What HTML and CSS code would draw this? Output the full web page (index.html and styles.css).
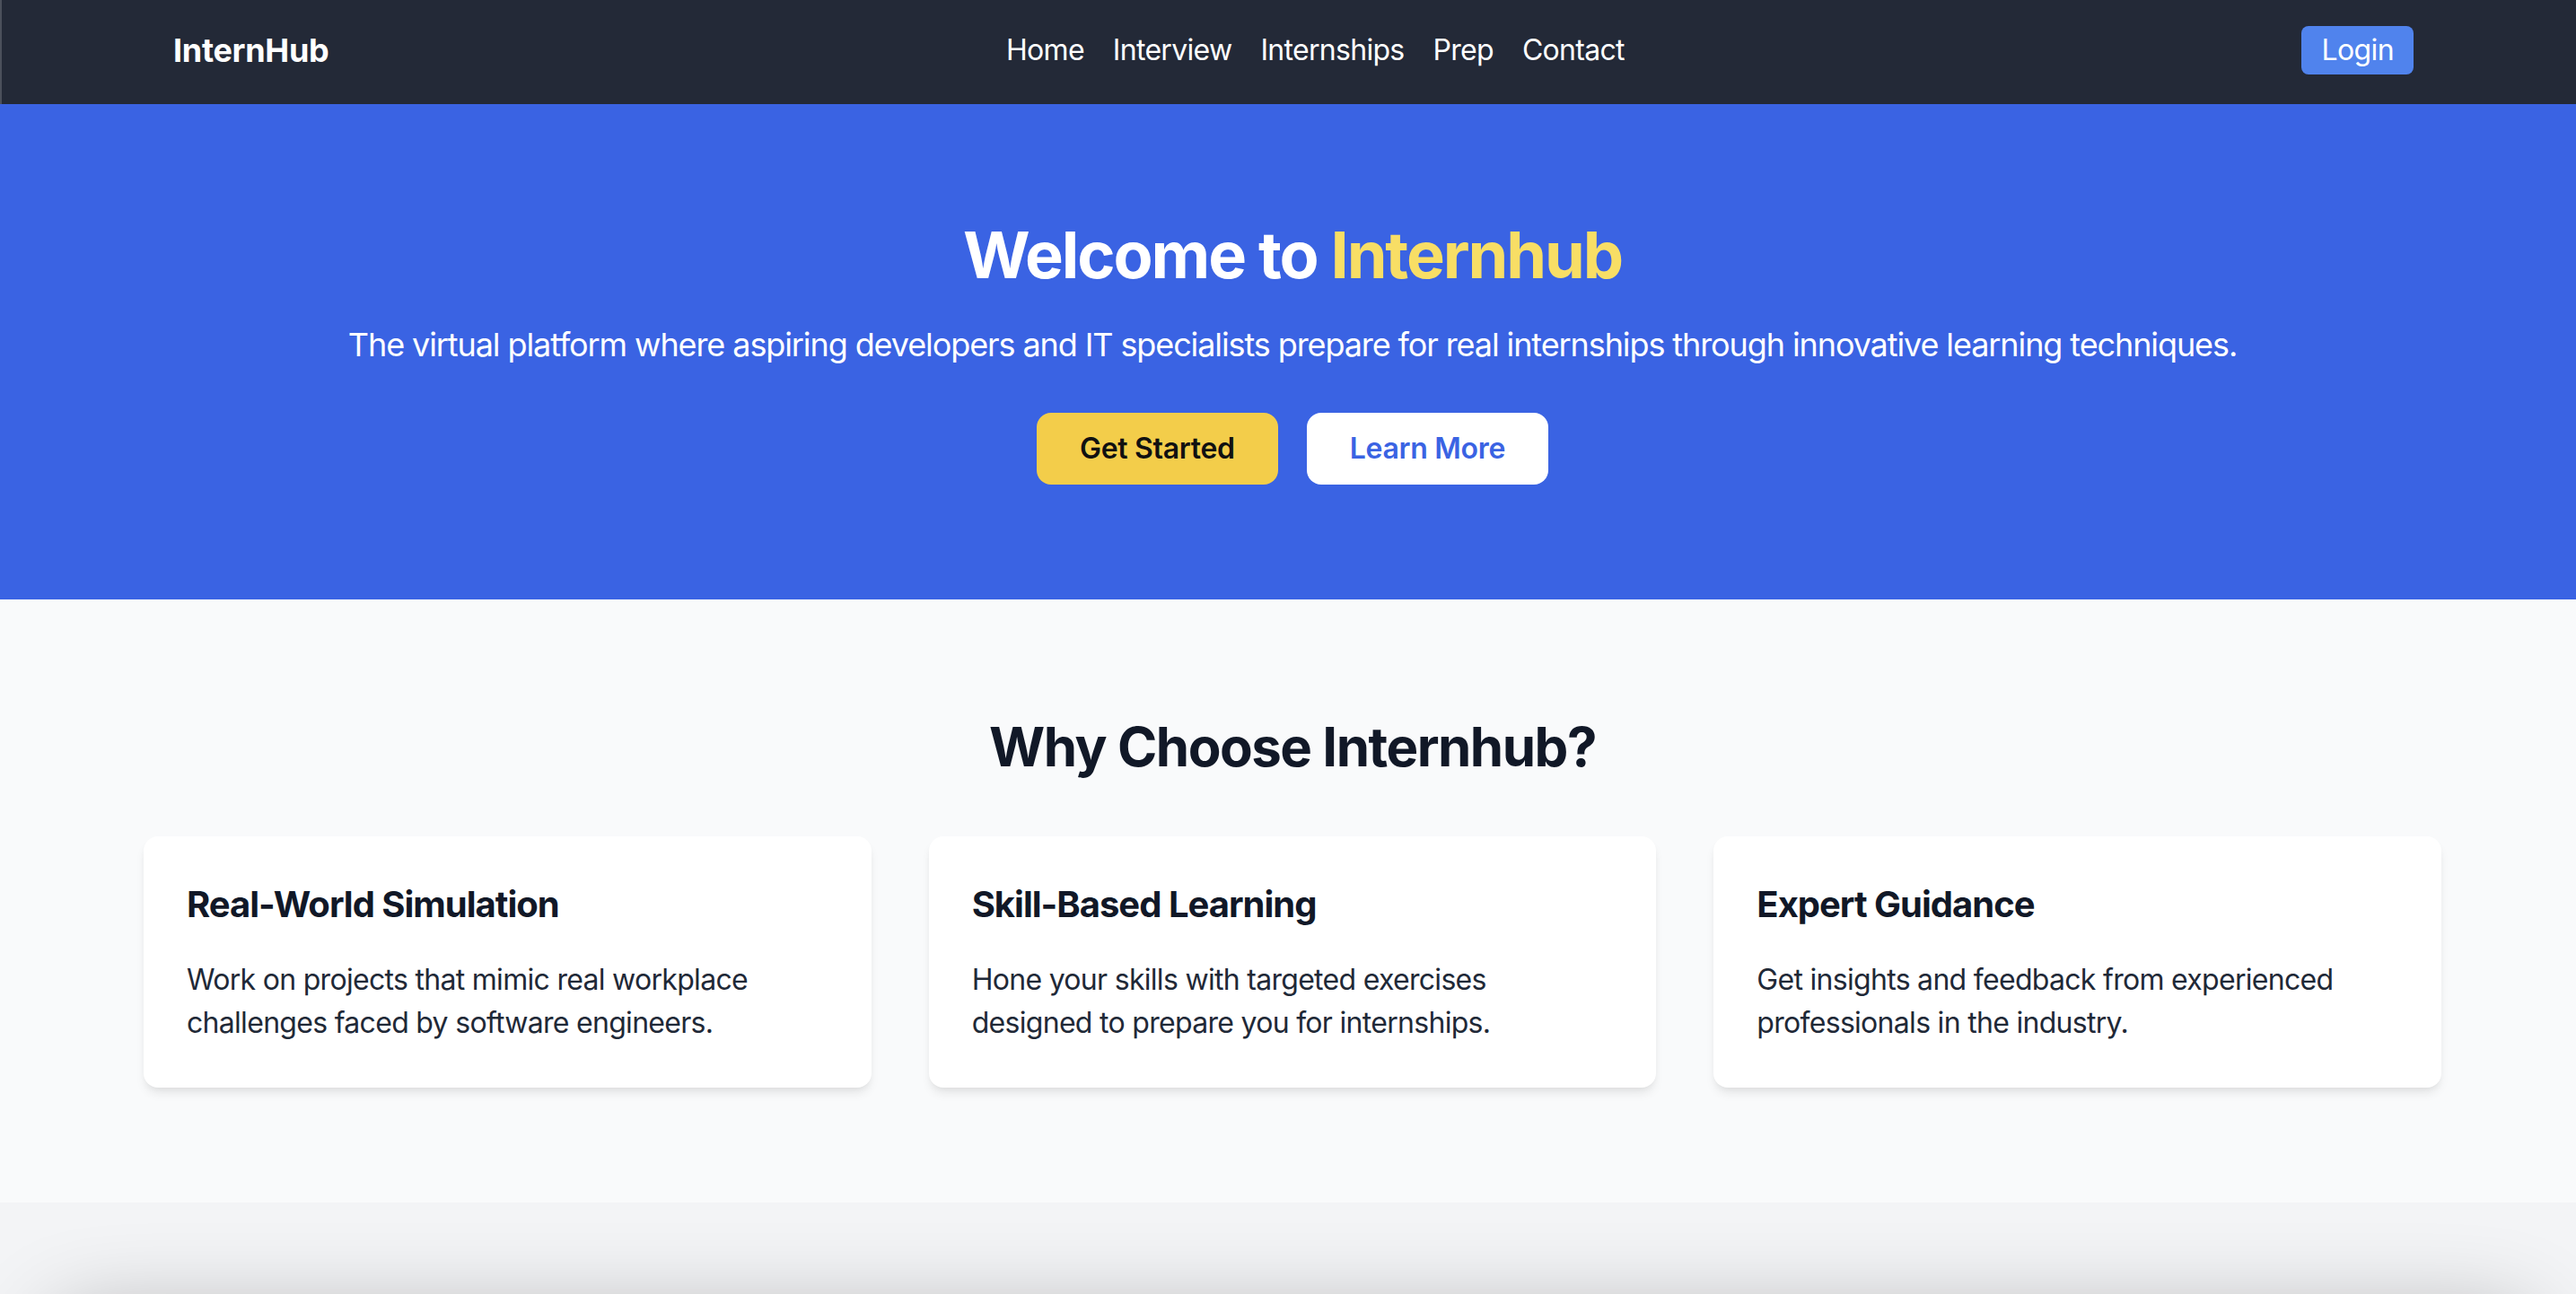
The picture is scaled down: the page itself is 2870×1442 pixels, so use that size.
FILE: index.html
```html
<!DOCTYPE html>
<html lang="en">
<head>
<meta charset="utf-8">
<title>InternHub</title>
<link rel="stylesheet" href="styles.css">
</head>
<body>
<nav class="navbar">
  <div class="nav-inner">
    <a class="logo" href="#">InternHub</a>
    <ul class="nav-links">
      <li><a href="#">Home</a></li>
      <li><a href="#">Interview</a></li>
      <li><a href="#">Internships</a></li>
      <li><a href="#">Prep</a></li>
      <li><a href="#">Contact</a></li>
    </ul>
    <a class="btn-login" href="#">Login</a>
  </div>
</nav>

<section class="hero">
  <div class="hero-inner">
    <h1 class="hero-title">Welcome to <span class="accent">Internhub</span></h1>
    <p class="hero-sub">The virtual platform where aspiring developers and IT specialists prepare for real internships through innovative learning techniques.</p>
    <div class="hero-actions">
      <a class="btn btn-primary" href="#">Get Started</a>
      <a class="btn btn-secondary" href="#">Learn More</a>
    </div>
  </div>
</section>

<section class="features">
  <div class="container">
    <h2 class="section-title">Why Choose Internhub?</h2>
    <div class="feature-grid">
      <div class="card">
        <h3 class="card-title">Real-World Simulation</h3>
        <p class="card-text">Work on projects that mimic real workplace challenges faced by software engineers.</p>
      </div>
      <div class="card">
        <h3 class="card-title">Skill-Based Learning</h3>
        <p class="card-text">Hone your skills with targeted exercises designed to prepare you for internships.</p>
      </div>
      <div class="card">
        <h3 class="card-title">Expert Guidance</h3>
        <p class="card-text">Get insights and feedback from experienced professionals in the industry.</p>
      </div>
    </div>
  </div>
</section>

<section class="next">
  <div class="panel"></div>
</section>
</body>
</html>
```

FILE: styles.css
```css
html {
  overflow: hidden;
}

* {
  box-sizing: border-box;
}

body {
  margin: 0;
  width: 2880px;
  font-family: Inter, "Noto Sans", "Liberation Sans", sans-serif;
  color: #1f2937;
  background: #f3f4f6;
}

a {
  text-decoration: none;
  color: inherit;
}

/* Navbar */
.navbar {
  background: #232937;
  border-left: 2px solid #4b505b;
}

.nav-inner {
  max-width: 2560px;
  margin: 0 auto;
  padding: 29px 32px 33px;
  display: flex;
  align-items: center;
  justify-content: space-between;
}

.logo {
  color: #ffffff;
  font-size: 36px;
  line-height: 54px;
  font-weight: 700;
  letter-spacing: -0.3px;
}

.nav-links {
  list-style: none;
  margin: 0;
  padding: 0;
  display: flex;
  gap: 32px;
}

.nav-links a {
  color: #ffffff;
  font-size: 32px;
  line-height: 48px;
  letter-spacing: -0.7px;
}

.btn-login {
  background: #5083ed;
  color: #ffffff;
  font-size: 32px;
  line-height: 48px;
  padding: 3px 22px;
  border-radius: 8px;
  letter-spacing: -0.6px;
}

/* Hero */
.hero {
  background: #3a63e3;
  padding: 128px 32px;
  text-align: center;
  color: #ffffff;
}

.hero-title {
  margin: 0 0 32px;
  font-size: 72px;
  line-height: 80px;
  font-weight: 700;
  letter-spacing: -2.1px;
}

.accent {
  color: #f8de65;
}

.hero-sub {
  margin: 0 0 48px;
  font-size: 36px;
  line-height: 56px;
  letter-spacing: -1.1px;
}

.hero-actions {
  display: flex;
  justify-content: center;
  gap: 32px;
}

.btn {
  display: inline-block;
  padding: 16px 48px;
  font-size: 32px;
  line-height: 48px;
  font-weight: 600;
  border-radius: 16px;
  letter-spacing: -0.3px;
}

.btn-primary {
  background: #f3cd4a;
  color: #111111;
}

.btn-secondary {
  background: #ffffff;
  color: #3a63e3;
}

/* Features */
.features {
  background: #f9fafb;
  padding: 128px 0;
}

.container {
  max-width: 2560px;
  margin: 0 auto;
}

.section-title {
  margin: 0 0 64px;
  text-align: center;
  font-size: 60px;
  line-height: 72px;
  font-weight: 700;
  color: #111827;
  letter-spacing: -1.5px;
}

.feature-grid {
  display: grid;
  grid-template-columns: repeat(3, 1fr);
  gap: 64px;
}

.card {
  background: #ffffff;
  border-radius: 16px;
  padding: 48px;
  box-shadow: 0 8px 12px -2px rgba(0, 0, 0, 0.08), 0 4px 8px -4px rgba(0, 0, 0, 0.08);
}

.card-title {
  margin: 0 0 32px;
  font-size: 40px;
  line-height: 56px;
  font-weight: 700;
  color: #111827;
  letter-spacing: -1px;
}

.card-text {
  margin: 0;
  font-size: 32px;
  line-height: 48px;
  color: #1f2937;
  letter-spacing: -0.7px;
}

/* Next section */
.next {
  background: #f3f4f6;
  padding: 128px 60px 128px;
}

.panel {
  height: 600px;
  background: #ffffff;
  border-radius: 32px;
  box-shadow: 0 0 100px rgba(0, 0, 0, 0.3);
}
```
